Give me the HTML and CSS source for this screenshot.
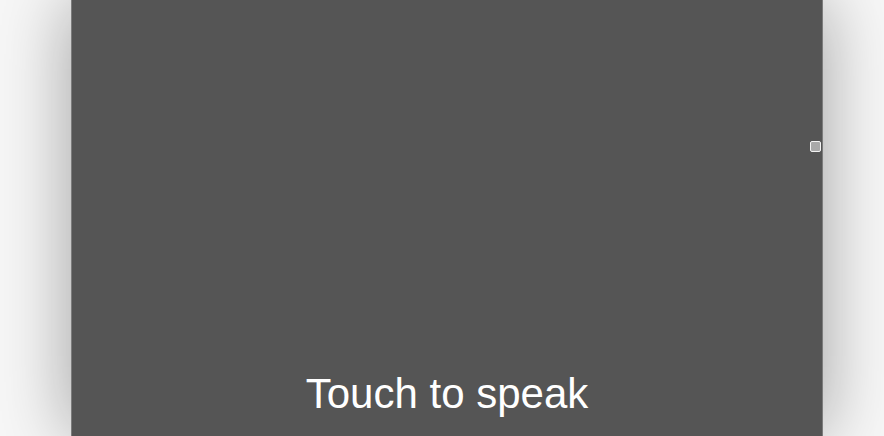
FILE: index.html
```html
<!DOCTYPE html>
<html>
<head>
<meta charset="utf-8">
<link rel="stylesheet" href="styles.css">
</head>
<body>
<div class="stage">
  <div class="panel">
    <span class="handle"></span>
    <div class="label">Touch to speak</div>
  </div>
</div>
</body>
</html>
```
FILE: styles.css
```css
html, body {
  margin: 0;
  padding: 0;
  height: 100%;
  background: #f7f7f7;
  overflow: hidden;
}
.stage {
  height: 100%;
  display: flex;
  justify-content: center;
  padding-left: 10px;
}
.panel {
  position: relative;
  width: 750px;
  height: 100%;
  background: #555555;
  border-left: 1px solid #7c7c7c;
  border-right: 1px solid #7c7c7c;
  box-shadow: 0 0 70px rgba(0, 0, 0, 0.36);
  display: flex;
  flex-direction: column;
  justify-content: flex-end;
  align-items: center;
}
.handle {
  position: absolute;
  right: 1px;
  top: 141px;
  width: 9px;
  height: 9px;
  background: #a9a9a9;
  border: 1px solid #f2f2f2;
  border-radius: 2px;
}
.label {
  font-family: "Liberation Sans", Arial, sans-serif;
  font-size: 42px;
  color: #ffffff;
  line-height: 48px;
  padding-bottom: 18px;
}
```
